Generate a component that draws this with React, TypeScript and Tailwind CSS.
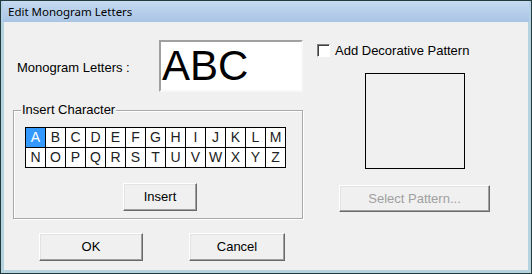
import React from "react";

const ROW1 = "ABCDEFGHIJKLM".split("");
const ROW2 = "NOPQRSTUVWXYZ".split("");

// Classic raised push button.
function PushButton({
  label,
  className,
  disabled,
}: {
  label: string;
  className: string;
  disabled?: boolean;
}) {
  return (
    <button
      type="button"
      className={`flex items-center justify-center bg-[#f0f0f0] border border-t-white border-l-white border-b-[#696969] border-r-[#696969] shadow-[inset_-1px_-1px_0_#a0a0a0,inset_1px_1px_0_#e3e3e3] text-[13px] ${
        disabled ? "text-[#a0a0a0]" : "text-black"
      } ${className}`}
    >
      {label}
    </button>
  );
}

export default function App() {
  const active = "A";

  return (
    <div
      className="flex h-[274px] w-[532px] flex-col overflow-hidden border border-[#223a3c] bg-[#f0f0f0]"
      style={{ fontFamily: '"Liberation Sans", Arial, sans-serif' }}
    >
      {/* Title bar. */}
      <div
        className="flex h-[21px] shrink-0 items-center bg-gradient-to-b from-[#c6daf1] to-[#a9c4e4] border-x-[2px] border-[#b4d0e6] pl-[5px] text-[11.5px] text-black"
        style={{ fontFamily: '"Noto Sans", "Open Sans", sans-serif' }}
      >
        Edit Monogram Letters
      </div>

      {/* Client area. */}
      <div className="flex flex-1 border-x-[3px] border-b-[3px] border-[#b4d3df] bg-[#f0f0f0]">
        {/* Left column. */}
        <div className="ml-[9px] flex w-[290px] flex-col">
          <div className="mt-[18px] flex h-[52px] items-center">
            <span className="ml-[4px] w-[142px] pt-[3px] text-[13px] text-black">
              Monogram Letters :
            </span>
            <div className="flex h-[52px] w-[144px] items-center border-2 border-t-[#a0a0a0] border-l-[#a0a0a0] border-b-[#f8f8f8] border-r-[#f8f8f8] bg-white pl-[1px] text-[42px] leading-none text-black">
              ABC
            </div>
          </div>

          {/* Insert Character group. */}
          <div className="relative mt-[18px] h-[109px] border border-[#a8a8a8] shadow-[inset_1px_1px_0_#fff,1px_1px_0_#fff]">
            <span className="absolute left-[7px] top-[-9px] bg-[#f0f0f0] px-[1px] text-[13px] leading-[16px] text-black">
              Insert Character
            </span>
            <div className="ml-[11px] mt-[16px] grid w-[261px] grid-cols-[repeat(13,20px)] border-l border-t border-black bg-white">
              {[...ROW1, ...ROW2].map((ch) => (
                <div
                  key={ch}
                  className={`flex h-[20px] items-center justify-center border-b border-r border-black text-[14px] ${
                    ch === active ? "bg-[#3399ff] text-white" : "text-[#222]"
                  }`}
                >
                  {ch}
                </div>
              ))}
            </div>
            <PushButton label="Insert" className="ml-[109px] mt-[15px] h-[28px] w-[74px]" />
          </div>

          {/* OK / Cancel. */}
          <div className="mt-[14px] flex gap-[46px] pl-[26px]">
            <PushButton label="OK" className="h-[28px] w-[104px]" />
            <PushButton label="Cancel" className="h-[28px] w-[96px]" />
          </div>
        </div>

        {/* Right column. */}
        <div className="ml-[14px] flex flex-col">
          <label className="mt-[22px] flex h-[13px] items-center gap-[5px] text-[13px] text-black">
            <span className="h-[13px] w-[13px] border border-t-[#808080] border-l-[#808080] border-b-white border-r-white bg-white shadow-[inset_1px_1px_0_#404040]" />
            Add Decorative Pattern
          </label>
          <div className="ml-[48px] mt-[16px] h-[96px] w-[100px] border border-black" />
          <PushButton
            label="Select Pattern..."
            disabled
            className="ml-[22px] mt-[16px] h-[27px] w-[151px]"
          />
        </div>
      </div>
    </div>
  );
}
